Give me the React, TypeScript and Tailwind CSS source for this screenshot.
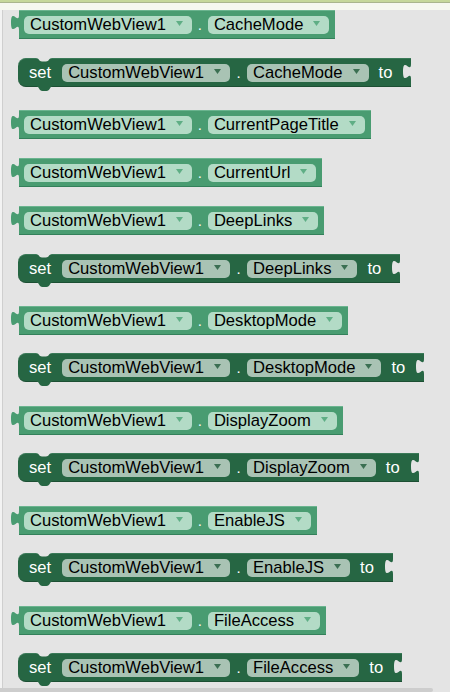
import React from "react";

type Row = { prop: string; kind: "get" | "set"; mt: number };

// block tops measured from the screenshot, expressed as gaps
const rows: Row[] = [
  { prop: "CacheMode", kind: "get", mt: 0 },
  { prop: "CacheMode", kind: "set", mt: 19 },
  { prop: "CurrentPageTitle", kind: "get", mt: 23 },
  { prop: "CurrentUrl", kind: "get", mt: 19 },
  { prop: "DeepLinks", kind: "get", mt: 19 },
  { prop: "DeepLinks", kind: "set", mt: 19 },
  { prop: "DesktopMode", kind: "get", mt: 23 },
  { prop: "DesktopMode", kind: "set", mt: 18 },
  { prop: "DisplayZoom", kind: "get", mt: 24 },
  { prop: "DisplayZoom", kind: "set", mt: 18 },
  { prop: "EnableJS", kind: "get", mt: 24 },
  { prop: "EnableJS", kind: "set", mt: 18 },
  { prop: "FileAccess", kind: "get", mt: 24 },
  { prop: "FileAccess", kind: "set", mt: 18 },
];

const Field = ({ label, kind }: { label: string; kind: "get" | "set" }) => (
  <div
    className={`flex h-[18px] items-center rounded-[5px] pl-[6px] pr-[9px] ${
      kind === "get" ? "bg-[#b3dbc6]" : "bg-[#a9c3b4]"
    }`}
  >
    <span className="whitespace-nowrap text-[16.6px] leading-[18px] text-black">
      {label}
    </span>
    <svg className="ml-[10px] -mt-[2px]" width="7" height="5" viewBox="0 0 7 5">
      <path d="M0 0H7L3.5 5Z" fill={kind === "get" ? "#5fae85" : "#3b6f52"} />
    </svg>
  </div>
);

const Dot = ({ w }: { w: string }) => (
  <span className={`${w} text-center text-[15px] leading-[18px] text-white`}>.</span>
);

const Getter = ({ prop, mt }: { prop: string; mt: number }) => (
  <div className="ml-[16px] flex" style={{ marginTop: mt }}>
    <div className="relative flex h-[29px] items-center border-y border-t-[#6bb48f] border-b-[#33805a] bg-[#499c71] pl-[5px] pr-[6px]">
      <svg
        className="absolute left-[-8px] top-[4px]"
        width="8"
        height="15"
        viewBox="0 0 8 15"
      >
        <path d="M8 0C8 10 0 -8 0 7.5S8 5 8 15Z" fill="#499c71" />
      </svg>
      <Field label="CustomWebView1" kind="get" />
      <Dot w="w-[16px]" />
      <Field label={prop} kind="get" />
    </div>
  </div>
);

const Setter = ({ prop, mt }: { prop: string; mt: number }) => (
  <div className="ml-[15px] flex" style={{ marginTop: mt }}>
    <div className="relative flex h-[29px] items-center rounded-l-[8px] border-y border-t-[#3a7a58] border-b-[#1c4f33] bg-[#266643] pl-[11px]">
      <svg
        className="absolute left-[18px] top-[-1px]"
        width="16"
        height="4"
        viewBox="0 0 16 4"
      >
        <path d="M0 0C3 0 3 3.5 6 3.5H10C13 3.5 13 0 16 0Z" fill="#e4e4e4" />
      </svg>
      <svg
        className="absolute bottom-[-5px] left-[18px]"
        width="17"
        height="5"
        viewBox="0 0 17 5"
      >
        <path d="M0 0C3 0 3 5 6.5 5H10.5C14 5 14 0 17 0Z" fill="#266643" />
      </svg>
      <span className="text-[16.6px] leading-[18px] text-white">set</span>
      <div className="ml-[11px]">
        <Field label="CustomWebView1" kind="set" />
      </div>
      <Dot w="w-[17px]" />
      <Field label={prop} kind="set" />
      <span className="ml-[10px] text-[16.6px] leading-[18px] text-white">to</span>
      <div className="ml-[11px] w-[8px] self-stretch">
        <svg width="8" height="27" viewBox="0 0 8 27">
          <path d="M8 5C8 15 0 -3 0 12.5S8 10 8 20Z" fill="#e4e4e4" />
        </svg>
      </div>
    </div>
  </div>
);

export default function App() {
  return (
    <div
      className="relative h-[692px] w-[450px] overflow-hidden bg-[#e4e4e4]"
      style={{ fontFamily: '"Liberation Sans", Arial, sans-serif' }}
    >
      <div className="h-[2px] bg-[#c6d79c]" />
      <div className="h-px bg-[#aab58f]" />
      <div className="h-[7px] bg-[#f6f7f1]" />
      <div className="flex">
        <div className="h-[682px] w-[3px] border-r border-[#cfcfcf] bg-[#f3f3f3]" />
        <div className="flex flex-col">
          {rows.map((r, i) =>
            r.kind === "get" ? (
              <Getter key={i} prop={r.prop} mt={r.mt} />
            ) : (
              <Setter key={i} prop={r.prop} mt={r.mt} />
            )
          )}
        </div>
      </div>
      <div className="absolute bottom-0 left-0 h-[4px] w-[433px] rounded-r-full bg-[#cdcdcd]" />
    </div>
  );
}
